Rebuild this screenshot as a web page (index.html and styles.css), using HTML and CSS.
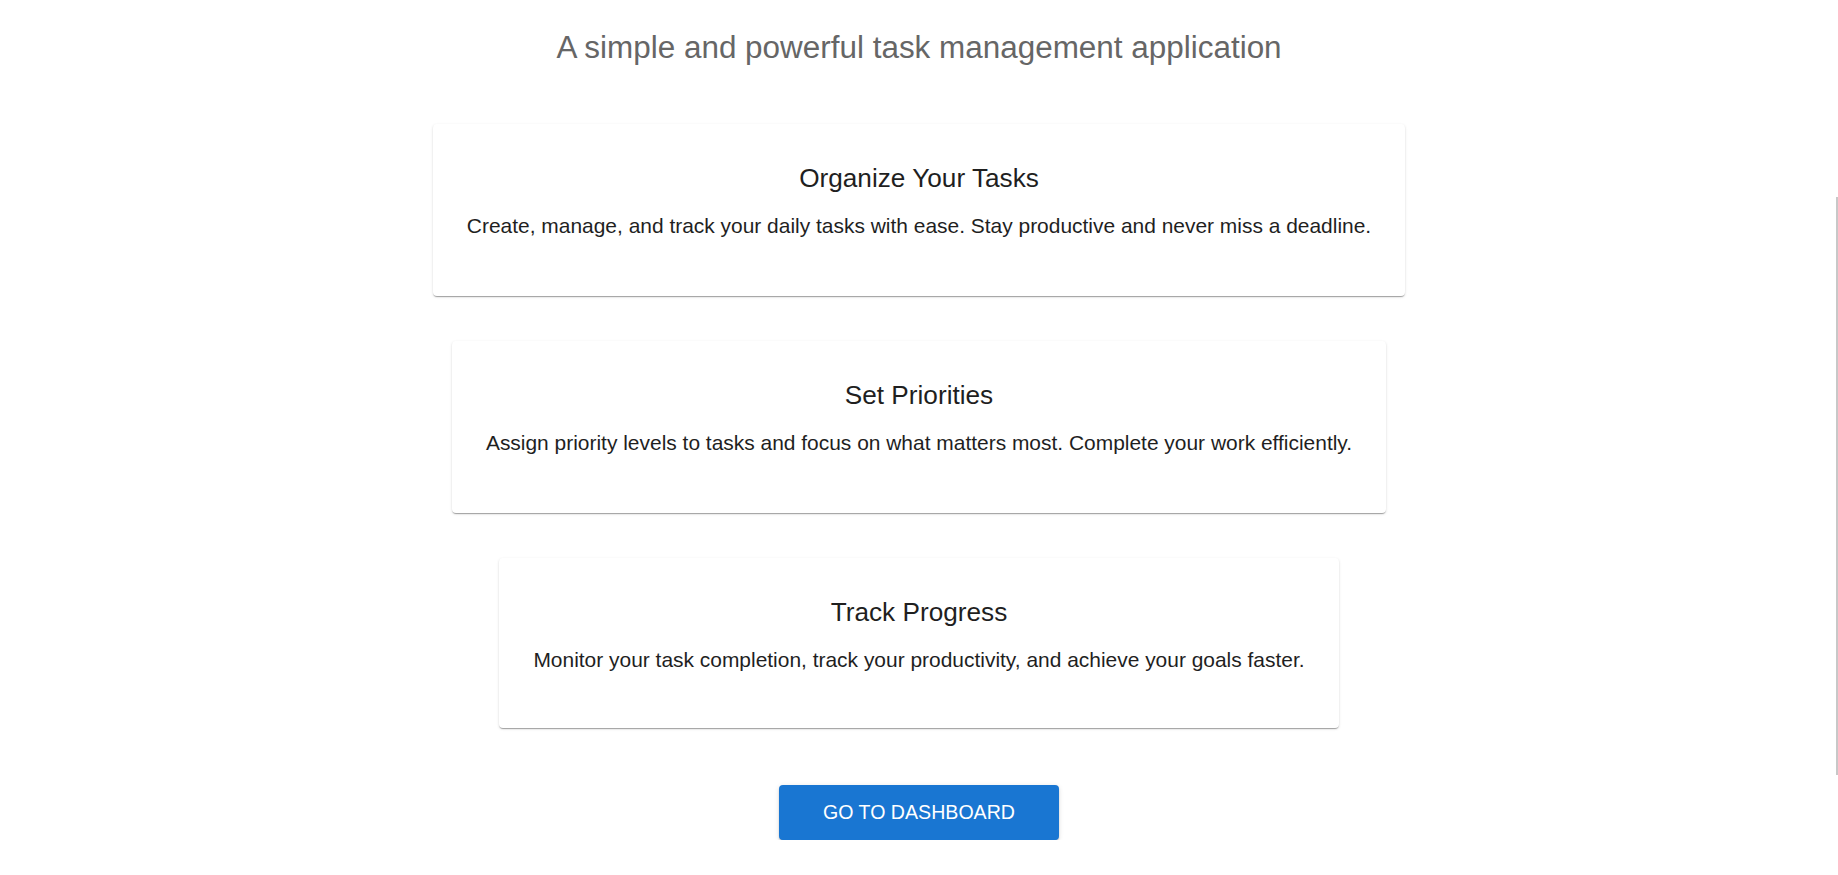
FILE: index.html
```html
<!DOCTYPE html>
<html lang="en">
<head>
<meta charset="utf-8">
<title>Task Manager</title>
<link rel="stylesheet" href="styles.css">
</head>
<body>
<main class="page">
  <p class="subtitle">A simple and powerful task management application</p>
  <section class="features">
    <article class="card">
      <h2 class="card-title">Organize Your Tasks</h2>
      <p class="card-text">Create, manage, and track your daily tasks with ease. Stay productive and never miss a deadline.</p>
    </article>
    <article class="card">
      <h2 class="card-title">Set Priorities</h2>
      <p class="card-text">Assign priority levels to tasks and focus on what matters most. Complete your work efficiently.</p>
    </article>
    <article class="card card-last">
      <h2 class="card-title">Track Progress</h2>
      <p class="card-text">Monitor your task completion, track your productivity, and achieve your goals faster.</p>
    </article>
  </section>
  <button class="cta" type="button">Go to Dashboard</button>
</main>
<div class="scroll-thumb"></div>
</body>
</html>
```

FILE: styles.css
```css
html, body {
  margin: 0;
  padding: 0;
  background: #ffffff;
}

body {
  font-family: "Liberation Sans", Arial, sans-serif;
  color: #212121;
  overflow: hidden;
}

.page {
  display: flex;
  flex-direction: column;
  align-items: center;
  padding-top: 28px;
}

.subtitle {
  margin: 0;
  font-size: 31.45px;
  line-height: 40px;
  color: #666666;
  font-weight: 400;
}

.features {
  display: flex;
  flex-direction: column;
  align-items: center;
  gap: 45px;
  margin-top: 56px;
}

.card {
  box-sizing: border-box;
  height: 172px;
  padding: 38px 34px 0;
  background: #ffffff;
  border-radius: 4px;
  box-shadow: 0 2px 1px -1px rgba(0, 0, 0, 0.2),
              0 1px 1px 0 rgba(0, 0, 0, 0.14),
              0 1px 3px 0 rgba(0, 0, 0, 0.12);
  text-align: center;
}

.card-last {
  height: 170px;
}

.card-title {
  margin: 0;
  font-size: 26.2px;
  line-height: 32px;
  font-weight: 400;
  color: #1f1f1f;
}

.card-text {
  margin: 17px 0 0;
  font-size: 20.95px;
  line-height: 30px;
  color: #1f1f1f;
  white-space: nowrap;
}

.cta {
  margin-top: 57px;
  height: 55px;
  padding: 0 44px;
  border: 0;
  border-radius: 4px;
  background: #1976d2;
  color: #ffffff;
  font-family: "Liberation Sans", Arial, sans-serif;
  font-size: 19.6px;
  text-transform: uppercase;
  letter-spacing: 0;
  box-shadow: 0 3px 1px -2px rgba(0, 0, 0, 0.2),
              0 2px 2px 0 rgba(0, 0, 0, 0.14),
              0 1px 5px 0 rgba(0, 0, 0, 0.12);
  cursor: pointer;
}

.scroll-thumb {
  position: fixed;
  top: 197px;
  right: 0;
  width: 2px;
  height: 578px;
  background: #c8c8c8;
}
```
